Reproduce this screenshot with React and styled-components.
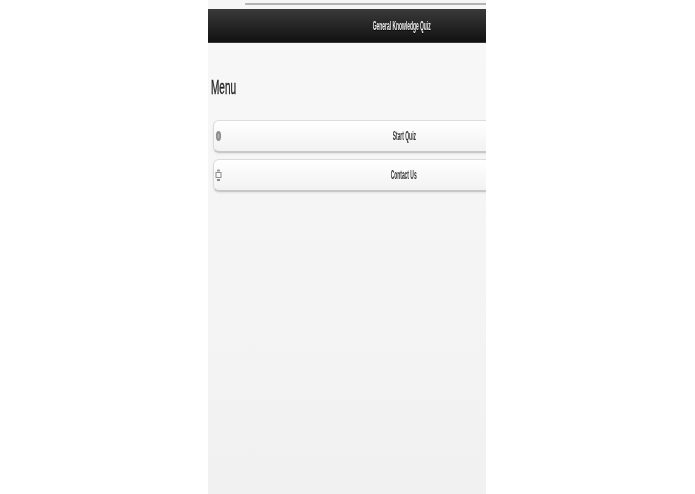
import React from "react";
import styled, { createGlobalStyle } from "styled-components";

const GlobalStyle = createGlobalStyle`
  html, body {
    margin: 0;
    padding: 0;
    background: #fff;
    font-family: "Liberation Sans", Arial, sans-serif;
  }
`;

const Page = styled.div`
  display: flex;
  justify-content: center;
  height: 494px;
  padding-right: 1px;
  overflow: hidden;
`;

const Phone = styled.div`
  width: 278px;
  height: 494px;
  display: flex;
  flex-direction: column;
  overflow: hidden;
  background: linear-gradient(#f8f8f8, #f1f1f1);
`;

const AddressStrip = styled.div`
  height: 9px;
  flex: none;
  padding: 3px 0 0 37px;
  box-sizing: border-box;
  background: #f6f6f6;
`;

const AddressLine = styled.div`
  height: 2px;
  background: #b4b4b4;
  border-radius: 1px 0 0 0;
`;

const Header = styled.header`
  flex: none;
  width: 390px;
  height: 34px;
  display: flex;
  align-items: center;
  justify-content: center;
  padding-right: 3px;
  box-sizing: border-box;
  background: linear-gradient(#3a3a3a, #111);
  border-bottom: 1px solid #3a3a3a;
`;

const Squeezed = styled.span`
  display: inline-block;
  white-space: nowrap;
  transform: scaleX(${(p) => p.$x});
`;

const HeaderTitle = styled(Squeezed)`
  color: #f4f4f4;
  font-size: 12px;
  font-weight: bold;
  text-shadow: 0 1px 1px #000;
  filter: blur(0.3px);
`;

const Content = styled.main`
  width: 390px;
  padding: 33px 0 0 5px;
  box-sizing: border-box;
  display: flex;
  flex-direction: column;
`;

const MenuHeading = styled.h2`
  margin: 0 0 22px -2px;
  height: 22px;
  font-size: 20px;
  line-height: 22px;
  font-weight: normal;
  color: #222;
`;

const HeadingText = styled(Squeezed)`
  transform-origin: left center;
  -webkit-text-stroke: 0.4px #222;
  filter: blur(0.3px);
`;

const MenuList = styled.ul`
  list-style: none;
  margin: 0;
  padding: 0;
  display: flex;
  flex-direction: column;
  gap: 6px;
`;

const MenuButton = styled.li`
  position: relative;
  width: 382px;
  height: 33px;
  box-sizing: border-box;
  display: flex;
  align-items: center;
  justify-content: center;
  border: 1px solid #dcdcdc;
  border-bottom: 2px solid #c8c8c8;
  border-radius: 6px;
  background: linear-gradient(#ffffff, #f2f2f2);
  box-shadow: 0 1px 2px rgba(0, 0, 0, 0.08);
`;

const ButtonLabel = styled(Squeezed)`
  color: #333;
  font-size: 12px;
  font-weight: bold;
  filter: blur(0.3px);
`;

const IconSlot = styled.span`
  position: absolute;
  left: 1px;
  top: 8px;
  display: flex;
  filter: blur(0.4px);
`;

const DotIcon = () => (
  <svg width="7" height="14" viewBox="0 0 7 14">
    <ellipse cx="3.5" cy="7" rx="2.6" ry="5" fill="#8e8e8e" />
    <ellipse cx="3.5" cy="7" rx="1" ry="2.6" fill="#b0b0b0" />
  </svg>
);

const MailIcon = () => (
  <svg width="7" height="14" viewBox="0 0 7 14">
    <rect x="2" y="1.5" width="3" height="2" fill="#a0a0a0" />
    <rect x="1" y="4.5" width="5" height="5" fill="none" stroke="#8e8e8e" strokeWidth="1" />
    <rect x="2" y="11" width="3" height="2" fill="#888" />
  </svg>
);

const items = [
  { label: "Start Quiz", icon: <DotIcon /> },
  { label: "Contact Us", icon: <MailIcon /> },
];

export default function App() {
  return (
    <Page>
      <GlobalStyle />
      <Phone>
        <AddressStrip>
          <AddressLine />
        </AddressStrip>
        <Header>
          <HeaderTitle $x={0.41}>General Knowledge Quiz</HeaderTitle>
        </Header>
        <Content>
          <MenuHeading>
            <HeadingText $x={0.5}>Menu</HeadingText>
          </MenuHeading>
          <MenuList>
            {items.map((item) => (
              <MenuButton key={item.label}>
                <IconSlot>{item.icon}</IconSlot>
                <ButtonLabel $x={0.41}>{item.label}</ButtonLabel>
              </MenuButton>
            ))}
          </MenuList>
        </Content>
      </Phone>
    </Page>
  );
}
